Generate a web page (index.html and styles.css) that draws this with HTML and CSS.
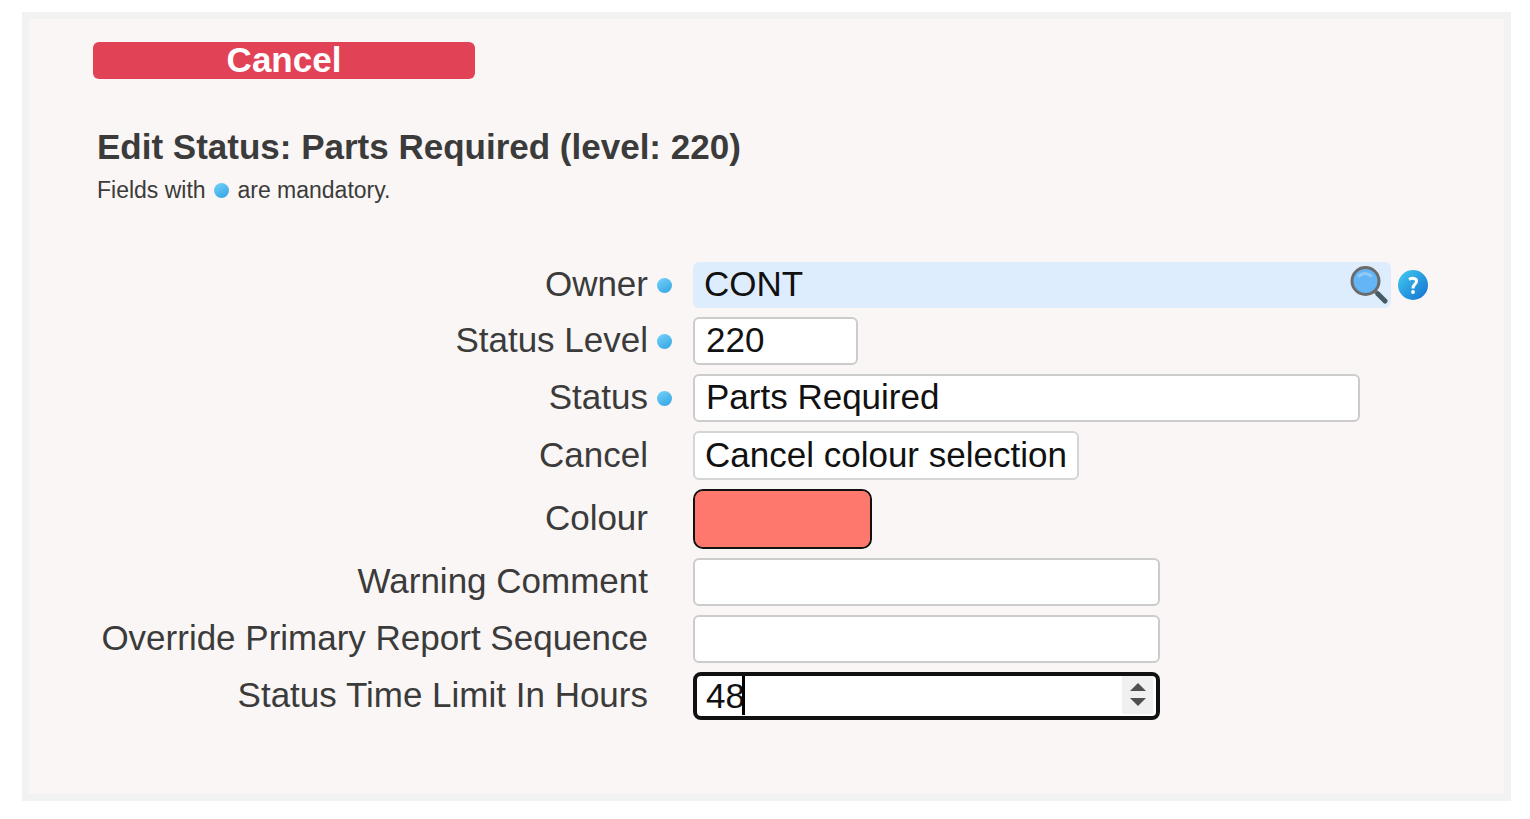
FILE: index.html
```html
<!DOCTYPE html>
<html lang="en">
<head>
    <meta charset="UTF-8">
    <meta name="viewport" content="width=device-width, initial-scale=1.0">
    <title>Edit Status</title>
    <link rel="stylesheet" href="styles.css">
</head>
<body>
    <main class="panel">
        <button class="cancel" type="button">Cancel</button>

        <h1>Edit Status: Parts Required (level: 220)</h1>
        <p class="note">Fields with <span class="dot"></span> are mandatory.</p>

        <form class="fields">
            <label for="owner">Owner</label>
            <span class="dot"></span>
            <div class="owner-row">
                <div class="lookup">
                    <input id="owner" type="text" value="CONT">
                    <button class="icon-button" type="button" aria-label="Search">
                        <svg width="38" height="38" viewBox="0 0 38 38">
                            <path d="M24 24 L29 29" stroke="#777" stroke-width="4"/>
                            <path d="M28 28 L35 35" stroke="#455a64" stroke-width="5" stroke-linecap="round"/>
                            <circle cx="15.500" cy="15" r="13.500" fill="#64b5f6" stroke="#6b6b6b" stroke-width="3"/>
                            <path d="M9 10 Q15 5 21 10" fill="none" stroke="#90caf9" stroke-width="3" stroke-linecap="round"/>
                        </svg>
                    </button>
                </div>
                <button class="icon-button" type="button" aria-label="Help">
                    <svg width="30" height="30" viewBox="0 0 30 30">
                        <defs>
                            <linearGradient id="helpFill" x1="0" y1="0" x2="1" y2="1">
                                <stop offset="0.1" stop-color="#3cc3ee"/>
                                <stop offset="0.9" stop-color="#1878d2"/>
                            </linearGradient>
                        </defs>
                        <circle cx="15" cy="15" r="15" fill="url(#helpFill)"/>
                        <path d="M11 9.500 C14 7.800 18.500 7.800 18.500 11.200 C18.500 14.500 15 14 15 18.500" fill="none" stroke="#fff" stroke-width="3"/>
                        <circle cx="15" cy="22" r="1.900" fill="#fff"/>
                    </svg>
                </button>
            </div>

            <label for="level">Status Level</label>
            <span class="dot"></span>
            <input id="level" class="short" type="text" value="220">

            <label for="status">Status</label>
            <span class="dot"></span>
            <input id="status" class="long" type="text" value="Parts Required">

            <label for="cancelColour">Cancel</label>
            <button id="cancelColour" class="plain" type="button">Cancel colour selection</button>

            <label for="colour">Colour</label>
            <input id="colour" class="swatch" type="color" value="#ff786d">

            <label for="warning">Warning Comment</label>
            <input id="warning" type="text">

            <label for="sequence">Override Primary Report Sequence</label>
            <input id="sequence" type="text">

            <label for="hours">Status Time Limit In Hours</label>
            <div class="hours">
                <input id="hours" type="number" value="48">
                <span class="caret"></span>
            </div>
        </form>
    </main>
</body>
</html>
```
FILE: styles.css
```css
* {
    box-sizing: border-box;
}

body {
    margin: 12px 19px 18px 22px;
    background: #fff;
    color: #3b3b3b;
    font-family: "Liberation Sans", Arial, sans-serif;
    font-size: 35px;
    line-height: 40px;
}

.panel {
    padding: 23px 64px 74px;
    background: #faf6f5;
    border: 7px solid #f2f2f2;
}

button,
input {
    font: inherit;
    color: #111;
}

.cancel {
    display: block;
    width: 382px;
    height: 37px;
    padding: 0 0 2px;
    background: #e24256;
    color: #fff;
    border: none;
    border-radius: 6px;
    font-weight: bold;
    line-height: 35px;
}

h1 {
    margin: 48px 4px 0;
    font-size: 35px;
    line-height: 40px;
}

.note {
    margin: 9px 4px 58px;
    font-size: 23px;
    line-height: 28px;
}

.dot {
    display: inline-block;
    width: 15px;
    height: 15px;
    border-radius: 50%;
    background: linear-gradient(150deg, #76d2f8, #2fa3e4);
}

.note .dot {
    margin: 0 2px;
}

.fields {
    display: grid;
    grid-template-columns: 555px 15px 1fr;
    column-gap: 9px;
    row-gap: 9px;
    align-items: center;
}

.fields label {
    grid-column: 1;
    padding-bottom: 2px;
    text-align: right;
    white-space: nowrap;
}

.fields > input,
.fields > button,
.fields > div {
    grid-column: 3;
    margin-left: 12px;
}

input {
    width: 467px;
    height: 48px;
    padding: 0 11px 2px;
    background: #fff;
    border: 2px solid #ccc;
    border-radius: 6px;
}

input.short {
    width: 165px;
}

input.long {
    width: 667px;
}

.plain {
    justify-self: start;
    height: 49px;
    padding: 0 10px 2px;
    background: #fff;
    border: 2px solid #d3d5d6;
    border-radius: 6px;
}

input.swatch {
    width: 179px;
    height: 60px;
    padding: 0;
    background: #ff786d;
    border: 2px solid #111;
    border-radius: 10px;
    appearance: none;
}

.swatch::-webkit-color-swatch-wrapper {
    padding: 0;
}

.swatch::-webkit-color-swatch {
    border: none;
    border-radius: 8px;
}

.owner-row {
    display: flex;
    align-items: center;
    gap: 7px;
}

.lookup {
    display: flex;
    align-items: center;
    width: 698px;
    height: 46px;
    padding-right: 3px;
    background: #deedfe;
    border-radius: 6px;
}

.lookup input {
    flex: 1;
    height: 44px;
    background: none;
    border: none;
}

.icon-button {
    padding: 0;
    background: none;
    border: none;
}

.icon-button svg {
    display: block;
}

.hours {
    position: relative;
}

.hours input {
    display: block;
    padding: 0 3px 0 9px;
    border: 4px solid #111;
    border-radius: 8px;
}

.hours input::-webkit-inner-spin-button {
    appearance: none;
    width: 31px;
    height: 38px;
    opacity: 1;
    background: #f0f0f0 url("data:image/svg+xml,%3Csvg xmlns='http://www.w3.org/2000/svg' width='31' height='38'%3E%3Cpath d='M8 15 L16 7 L24 15 Z M8 22 L16 30 L24 22 Z' fill='%23505050'/%3E%3C/svg%3E") no-repeat center;
}

/* text cursor after the value */
.caret {
    position: absolute;
    top: 4px;
    left: 49px;
    width: 3px;
    height: 39px;
    background: #000;
}
```
